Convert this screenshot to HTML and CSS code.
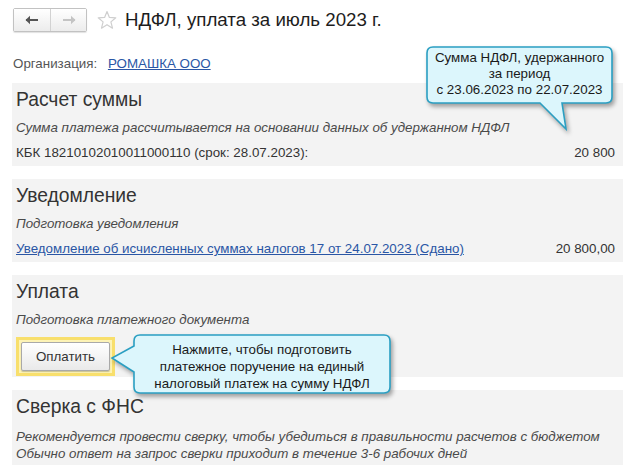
FILE: index.html
```html
<!DOCTYPE html>
<html lang="ru">
<head>
  <meta charset="UTF-8" />
  <title>НДФЛ, уплата за июль 2023 г.</title>
  <link rel="stylesheet" href="styles.css">
</head>
<body>
  <div class="page">
    <div class="topbar">
      <div class="nav">
        <button class="nav-btn">
          <svg width="14" height="10" viewBox="0 0 14 10"><path d="M1 5 H13" stroke="#555" stroke-width="2"/><path d="M0.5 5 L5 0.8 V9.2 Z" fill="#555"/></svg>
        </button>
        <button class="nav-btn">
          <svg width="14" height="10" viewBox="0 0 14 10"><path d="M1 5 H13" stroke="#c4c4c4" stroke-width="2"/><path d="M13.5 5 L9 0.8 V9.2 Z" fill="#c4c4c4"/></svg>
        </button>
      </div>
      <svg class="star" width="20" height="20" viewBox="0 0 20 20"><path d="M10 1.5 L12.4 7.4 L18.8 7.8 L13.9 11.9 L15.5 18.2 L10 14.7 L4.5 18.2 L6.1 11.9 L1.2 7.8 L7.6 7.4 Z" fill="none" stroke="#cfcfcf" stroke-width="1.2" stroke-linejoin="round"/></svg>
      <h1 class="title">НДФЛ, уплата за июль 2023 г.</h1>
    </div>

    <div class="org">
      <span class="org-label">Организация:</span>
      <a class="link" href="#">РОМАШКА ООО</a>
    </div>

    <div class="panel">
      <div class="heading">Расчет суммы</div>
      <div class="row note">Сумма платежа рассчитывается на основании данных об удержанном НДФЛ</div>
      <div class="row split">
        <span>КБК 18210102010011000110 (срок: 28.07.2023):</span>
        <span>20 800</span>
      </div>
    </div>

    <div class="panel">
      <div class="heading">Уведомление</div>
      <div class="row note">Подготовка уведомления</div>
      <div class="row split">
        <a class="link" href="#">Уведомление об исчисленных суммах налогов 17 от 24.07.2023 (Сдано)</a>
        <span>20 800,00</span>
      </div>
    </div>

    <div class="panel panel-pay">
      <div class="heading">Уплата</div>
      <div class="row note">Подготовка платежного документа</div>
      <div class="focus">
        <button class="pay-btn">Оплатить</button>
      </div>
    </div>

    <div class="panel panel-last">
      <div class="heading">Сверка с ФНС</div>
      <div class="note note-block">Рекомендуется провести сверку, чтобы убедиться в правильности расчетов с бюджетом<br>Обычно ответ на запрос сверки приходит в течение 3-6 рабочих дней</div>
    </div>

    <div class="callout callout-sum">
      <svg width="195" height="90" viewBox="0 0 195 90">
        <path d="M8,2 H181 Q187,2 187,8 V52 Q187,58 181,58 H137 L141,84 L115,58 H8 Q2,58 2,52 V8 Q2,2 8,2 Z" fill="#dcf6fc" stroke="#2a9fc2" stroke-width="1.6"/>
      </svg>
      <div class="callout-text">Сумма НДФЛ, удержанного<br>за период<br>с 23.06.2023 по 22.07.2023</div>
    </div>

    <div class="callout callout-pay">
      <svg width="290" height="70" viewBox="0 0 290 70">
        <path d="M32,4 H276 Q282,4 282,10 V56 Q282,62 276,62 H32 Q26,62 26,56 V41 L4,27 L26,15 V10 Q26,4 32,4 Z" fill="#dcf6fc" stroke="#2a9fc2" stroke-width="1.6"/>
      </svg>
      <div class="callout-text">Нажмите, чтобы подготовить<br>платежное поручение на единый<br>налоговый платеж на сумму НДФЛ</div>
    </div>
  </div>
</body>
</html>
```

FILE: styles.css
```css
body {
  margin: 0;
  background: #fff;
  font-family: "Liberation Sans", Arial, sans-serif;
  font-size: 13.35px;
  color: #333;
}

.page {
  position: relative;
  width: 627px;
  height: 465px;
  overflow: hidden;
  padding: 8px 4px 0 12px;
  box-sizing: border-box;
}

.topbar {
  display: flex;
  align-items: center;
  height: 24px;
  margin-left: 1px;
}

.nav {
  display: flex;
  border: 1px solid #c2c2c2;
  border-radius: 2px;
  box-shadow: 0 1px 1px rgba(0, 0, 0, 0.12);
}

.nav-btn {
  width: 36px;
  height: 22px;
  border: none;
  padding: 0;
  background: linear-gradient(#ffffff, #ececec);
  display: flex;
  align-items: center;
  justify-content: center;
}

.nav-btn + .nav-btn {
  border-left: 1px solid #d2d2d2;
}

.star {
  margin-left: 10px;
}

.title {
  margin: 0 0 0 8px;
  font-size: 18.7px;
  font-weight: normal;
  color: #1d1d1d;
  line-height: 24px;
}

.org {
  margin: 23px 0 10px 1px;
  line-height: 18px;
}

.org-label {
  color: #555;
  margin-right: 7px;
}

.link {
  color: #2a56a5;
  text-decoration: underline;
}

.panel {
  background: #f3f3f3;
  padding: 6px 8px 4px 4px;
  margin-bottom: 13px;
}

.heading {
  font-size: 19.3px;
  line-height: 22px;
  color: #333;
  margin-bottom: 8px;
}

.row {
  line-height: 18px;
}

.row + .row {
  margin-top: 7px;
}

.note {
  font-style: italic;
  color: #4a4a4a;
}

.split {
  display: flex;
  justify-content: space-between;
}

.panel-pay {
  padding-bottom: 1px;
}

.focus {
  display: inline-block;
  margin: 8px 0 0 0;
  border: 3px solid #f8df6c;
  background: #fdf3b6;
  padding: 2px;
}

.pay-btn {
  width: 89px;
  height: 29px;
  border: 1px solid #a9a9a9;
  border-radius: 2px;
  background: linear-gradient(#ffffff, #e9e9e9);
  box-shadow: 0 1px 1px rgba(0, 0, 0, 0.2);
  font-family: inherit;
  font-size: 13.35px;
  color: #333;
  padding: 0;
}

.panel-last {
  height: 80px;
  box-sizing: border-box;
}

.note-block {
  line-height: 17px;
  margin-top: 10px;
}

.callout {
  position: absolute;
}

.callout svg {
  display: block;
  filter: drop-shadow(2px 3px 2px rgba(0, 0, 0, 0.35));
}

.callout-text {
  position: absolute;
  text-align: center;
  color: #1a1a1a;
}

.callout-sum {
  left: 425px;
  top: 45px;
}

.callout-sum .callout-text {
  left: 2px;
  top: 5px;
  width: 185px;
  line-height: 16px;
}

.callout-pay {
  left: 108px;
  top: 331px;
}

.callout-pay .callout-text {
  left: 26px;
  top: 10px;
  width: 256px;
  line-height: 17px;
}
```
